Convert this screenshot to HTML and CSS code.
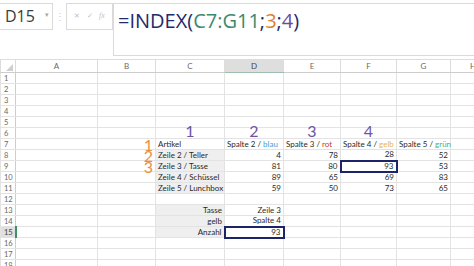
FILE: index.html
```html
<!DOCTYPE html>
<html lang="de">
<head>
    <meta charset="UTF-8">
    <title>INDEX Beispiel</title>
    <link rel="stylesheet" href="styles.css">
</head>
<body>

    <div class="topbar">
        <div class="namebox"><span>D15</span><span class="drop">&#9662;</span></div>
        <div class="sep">&#8942;</div>
        <div class="fx-box"><span>&#10005;</span><span>&#10003;</span><span class="fx">fx</span></div>
        <div class="formula">
            <span class="f-navy">=INDEX(</span><span class="f-green">C7:G11</span><span class="f-navy">;</span><span class="f-orange">3</span><span class="f-navy">;</span><span class="f-purple">4</span><span class="f-navy">)</span>
        </div>
    </div>

    <table class="sheet">
        <colgroup>
            <col class="w-rh"><col class="w-a"><col class="w-b"><col class="w-c"><col class="w-d"><col class="w-e"><col class="w-f"><col class="w-g"><col class="w-h">
        </colgroup>
        <thead>
            <tr>
                <th class="corner"><svg width="7" height="7" viewBox="0 0 7 7"><polygon points="7,0 7,7 0,7" fill="#cfcfcf"/></svg></th>
                <th>A</th><th>B</th><th>C</th><th class="sel">D</th><th>E</th><th>F</th><th>G</th><th>H</th>
            </tr>
        </thead>
        <tbody>
            <tr><th>1</th><td></td><td></td><td></td><td></td><td></td><td></td><td></td><td></td></tr>
            <tr><th>2</th><td></td><td></td><td></td><td></td><td></td><td></td><td></td><td></td></tr>
            <tr><th>3</th><td></td><td></td><td></td><td></td><td></td><td></td><td></td><td></td></tr>
            <tr><th>4</th><td></td><td></td><td></td><td></td><td></td><td></td><td></td><td></td></tr>
            <tr><th>5</th><td></td><td></td><td></td><td></td><td></td><td></td><td></td><td></td></tr>
            <tr>
                <th>6</th><td></td><td></td>
                <td class="big purple pc">1</td><td class="big purple pd">2</td><td class="big purple pe">3</td><td class="big purple pf">4</td>
                <td></td><td></td>
            </tr>
            <tr>
                <th>7</th><td></td><td class="big orange">1</td>
                <td class="w top left">Artikel</td>
                <td class="w top">Spalte 2 / <span class="blau">blau</span></td>
                <td class="w top">Spalte 3 / <span class="rot">rot</span></td>
                <td class="w top">Spalte 4 / <span class="gelb">gelb</span></td>
                <td class="w top right">Spalte 5 / <span class="gruen">grün</span></td>
                <td></td>
            </tr>
            <tr>
                <th>8</th><td></td><td class="big orange">2</td>
                <td class="g left">Zeile 2 / Teller</td>
                <td class="w n nd">4</td><td class="w n ne">78</td><td class="w n nf">28</td><td class="w n ng right">52</td>
                <td></td>
            </tr>
            <tr>
                <th>9</th><td></td><td class="big orange">3</td>
                <td class="g left">Zeile 3 / Tasse</td>
                <td class="w n nd">81</td><td class="w n ne">80</td><td class="w n hit">93</td><td class="w n ng right">53</td>
                <td></td>
            </tr>
            <tr>
                <th>10</th><td></td><td></td>
                <td class="g left">Zeile 4 / Schüssel</td>
                <td class="w n nd">89</td><td class="w n ne">65</td><td class="w n nf">69</td><td class="w n ng right">83</td>
                <td></td>
            </tr>
            <tr>
                <th>11</th><td></td><td></td>
                <td class="g left bottom">Zeile 5 / Lunchbox</td>
                <td class="w n nd bottom">59</td><td class="w n ne bottom">50</td><td class="w n nf bottom">73</td><td class="w n ng right bottom">65</td>
                <td></td>
            </tr>
            <tr><th>12</th><td></td><td></td><td></td><td></td><td></td><td></td><td></td><td></td></tr>
            <tr><th>13</th><td></td><td></td><td class="g n">Tasse</td><td class="w n">Zeile 3</td><td></td><td></td><td></td><td></td></tr>
            <tr><th>14</th><td></td><td></td><td class="g n">gelb</td><td class="w n">Spalte 4</td><td></td><td></td><td></td><td></td></tr>
            <tr><th class="sel-row">15</th><td></td><td></td><td class="g n">Anzahl</td><td class="w n hit">93</td><td></td><td></td><td></td><td></td></tr>
            <tr><th>16</th><td></td><td></td><td></td><td></td><td></td><td></td><td></td><td></td></tr>
            <tr><th>17</th><td></td><td></td><td></td><td></td><td></td><td></td><td></td><td></td></tr>
            <tr><th>18</th><td></td><td></td><td></td><td></td><td></td><td></td><td></td><td></td></tr>
        </tbody>
    </table>

</body>
</html>
```

FILE: styles.css
```css
html, body { margin: 0; padding: 0; background: #fff; }
body { width: 474px; height: 266px; overflow: hidden; font-family: Lato, "Liberation Sans", sans-serif; color: #2a2a2a; }

/* formula bar */
.topbar { display: flex; align-items: flex-start; height: 59px; padding-top: 3px; box-sizing: border-box; }
.namebox { width: 53px; height: 27px; box-sizing: border-box; border: 1px solid #dadada; border-left: none; display: flex; align-items: center; justify-content: space-between; padding: 0 3px 1px 5px; font-family: "Open Sans", sans-serif; font-size: 16px; color: #3c3c3c; }
.namebox .drop { font-size: 7px; color: #a8a8a8; margin-top: -4px; }
.sep { width: 13px; text-align: center; color: #cfcfcf; font-size: 10px; line-height: 27px; }
.fx-box { width: 47px; height: 27px; box-sizing: border-box; border: 1px solid #dadada; display: flex; align-items: center; justify-content: space-around; padding: 0 4px 2px; font-size: 7px; color: #c2c2c2; }
.fx-box .fx { font-style: italic; font-family: "Liberation Serif", serif; font-size: 8px; }
.formula { flex: 1; height: 53px; box-sizing: border-box; border: 1px solid #dadada; border-right: none; padding: 2px 0 0 4px; font-family: "Open Sans", sans-serif; font-size: 20px; line-height: 30px; white-space: nowrap; }
.f-navy { color: #232a6a; }
.f-green { color: #3b8a6b; }
.f-orange { color: #e07f2c; }
.f-purple { color: #6b4c9e; }

/* grid */
.sheet { border-collapse: collapse; table-layout: fixed; width: 495px; font-size: 8px; }
.w-rh { width: 15px; } .w-a { width: 82px; } .w-b { width: 58px; } .w-c { width: 69px; }
.w-d { width: 59px; } .w-e { width: 57px; } .w-f { width: 56px; } .w-g { width: 54px; } .w-h { width: 45px; }
.sheet tr { height: 11px; }
.sheet td, .sheet th { box-sizing: border-box; padding: 0 2px; height: 11px; line-height: 9px; border: 1px solid #e3e3e3; white-space: nowrap; overflow: visible; vertical-align: middle; }
.sheet thead tr { height: 13px; }
.sheet thead th { height: 13px; font-weight: normal; color: #6b6b6b; text-align: center; background: #fff; border-color: #dcdcdc; border-bottom-color: #cdcdcd; }
.sheet thead th.sel { background: #dedede; color: #444; border-bottom: 1px solid #9fbfae; }
.sheet thead th.corner { text-align: right; vertical-align: bottom; padding: 0 2px 1px 0; line-height: 0; }
.sheet tbody th { font-weight: normal; text-align: left; padding-left: 3px; color: #666; font-size: 7.5px; background: #fff; border-color: #e3e3e3; border-right-color: #cdcdcd; }
.sheet tbody th.sel-row { background: #e0e0e0; color: #444; border-right: 2px solid #3f8f62; }

/* formatted cells */
.w { background: #fff; border-color: #fff; }
.g { background: #efefef; border-color: #efefef; }
.n { text-align: right; padding-right: 1px; }
.nd { padding-right: 5px; }
.ne { padding-right: 8px; }
.nf { padding-right: 8px; }
.ng { padding-right: 2px; }
.top { border-top: 2px solid #2f8a5c; }
.left { border-left: 2px solid #2f8a5c; }
.right { border-right: 2px solid #2f8a5c; }
.bottom { border-bottom: 2px solid #2f8a5c; }
.sheet td.hit { border: 2px solid #1c2366; padding-right: 2px; }

.blau { color: #3d9fd6; }
.rot { color: #c4392f; }
.gelb { color: #e5b552; }
.gruen { color: #4daf78; }

/* the 1-2-3-4 markers */
.big { font-size: 16px; line-height: 9px; }
.orange { color: #e8913f; text-align: right; padding-right: 1px; }
.sheet td.purple { color: #6d55a2; text-align: center; vertical-align: top; line-height: 5px; }
.pc { padding-left: 9px; }
.pd { padding-left: 20px; }
.pe { padding-left: 18px; }
.pf { padding-left: 12px; }
```
